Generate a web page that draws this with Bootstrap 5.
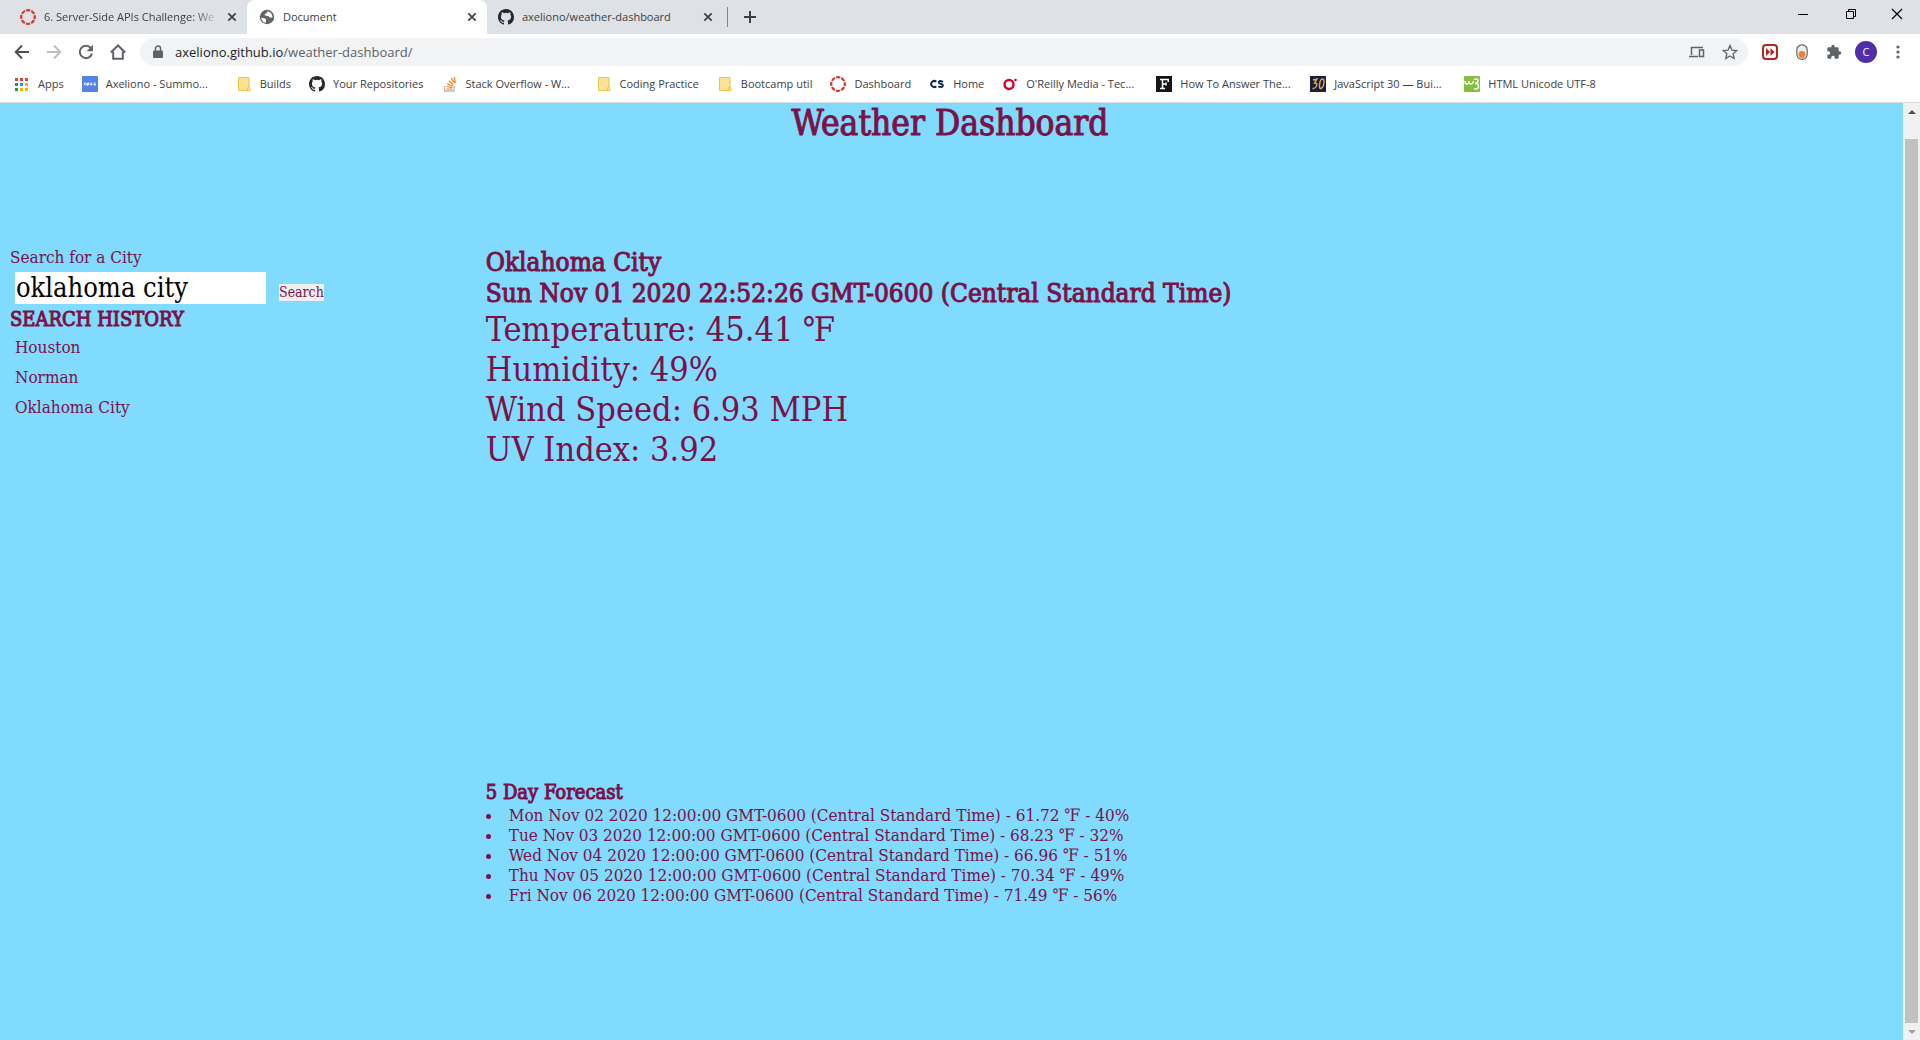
<!DOCTYPE html>
<html lang="en">
<head>
<meta charset="utf-8">
<meta name="viewport" content="width=device-width, initial-scale=1">
<title>Document</title>
<link href="https://cdn.jsdelivr.net/npm/bootstrap@5.3.0/dist/css/bootstrap.min.css" rel="stylesheet">
<style>
  body { font-family: "Open Sans", "Noto Sans", sans-serif; font-size: 11px; line-height: 16px; color: #3c4043; }
  button { border: 0; background: none; padding: 0; color: inherit; font: inherit; }
  svg { display: block; flex: none; }

  /* browser window */
  .tabstrip { height: 34px; background: #dee1e6; }
  .tab-item { width: 240px; padding: 0 10px 0 11px; gap: 8px; }
  .tab-first { width: 247px; padding-left: 20px; }
  .tab-current { background: #fff; border-radius: 8px 8px 0 0; padding-left: 12px; }
  .tab-title { flex: 1 1 0; overflow: hidden; white-space: nowrap; }
  .tab-fade { -webkit-mask-image: linear-gradient(to right, #000 86%, transparent); mask-image: linear-gradient(to right, #000 86%, transparent); }
  .tab-line { width: 1px; height: 20px; background: #80868b; }
  .window-keys { gap: 34px; padding: 0 17px 6px 0; color: #000; }
  .toolbar { height: 36px; padding: 0 14px; gap: 16px; color: #5f6368; }
  .addressbar { height: 28px; border-radius: 14px; background: #f1f3f4; padding: 0 10px 0 12px; gap: 11px; margin: 0 -2px; }
  .address-url { font-size: 13px; line-height: 20px; color: #5f6368; text-decoration: none; }
  .address-url span { color: #202124; }
  .address-icons { gap: 17px; }
  .avatar { width: 22px; height: 22px; border-radius: 50%; background: #512da8; color: #fff; margin: 0 -3px; }
  .bookmarks { height: 33px; padding: 0 14px 4px; gap: 18px; border-bottom: 1px solid #dadce0; }
  .bookmark { gap: 8px; color: #3c4043; text-decoration: none; white-space: nowrap; }
  .bookmark-long { width: 136px; }

  /* page */
  .weather-page { background: #80dbff; color: #7b1247; font-family: "DejaVu Serif Condensed", "DejaVu Serif", serif; font-size: 17px; line-height: 20px; overflow: hidden; }
  .weather-page h1, .weather-page h2, .weather-page h3 { font-weight: 400; -webkit-text-stroke: 1px #7b1247; }
  .weather-page h1 { font-size: 35px; line-height: 40px; margin: 0 3px 104px 0; }
  .side-col, .main-col { padding: 0 10px; }
  .weather-page h2 { font-size: 26px; line-height: 31px; margin: 0; }
  .weather-page h3 { font-size: 20px; line-height: 25px; margin: 0; }
  .search-row { padding: 5px 5px 3px; gap: 13px; }
  .city-box { width: 251px; height: 32px; border: 0; padding: 0 1px; border-radius: 0; font-size: 27px; line-height: 32px; color: #000; }
  .search-key { background: #efefef; font-size: 14px; line-height: 17px; margin-bottom: 3px; }
  .history { padding: 5px 5px; gap: 10px; }
  .current { height: 533px; }
  .current p { font-size: 34px; line-height: 40px; margin: 0; }
  .forecast { list-style: disc inside; }

  .scrollrail { width: 17px; background: #f1f1f1; padding: 0 2px; }
  .scroll-end { height: 17px; }
  .scroll-thumb { background: #c1c1c1; margin-top: 19px; }
</style>
<script src="https://cdn.jsdelivr.net/npm/bootstrap@5.3.0/dist/js/bootstrap.bundle.min.js"></script>
</head>
<body class="vh-100 d-flex flex-column overflow-hidden">
<svg width="0" height="0" class="position-absolute" aria-hidden="true">
  <symbol id="octo" viewBox="0 0 16 16"><path fill="#24292e" d="M8 0C3.58 0 0 3.58 0 8c0 3.54 2.29 6.53 5.47 7.59.4.07.55-.17.55-.38 0-.19-.01-.82-.01-1.49-2.01.37-2.53-.49-2.69-.94-.09-.23-.48-.94-.82-1.13-.28-.15-.68-.52-.01-.53.63-.01 1.08.58 1.23.82.72 1.21 1.87.87 2.33.66.07-.52.28-.87.51-1.07-1.78-.2-3.64-.89-3.64-3.95 0-.87.31-1.59.82-2.15-.08-.2-.36-1.02.08-2.12 0 0 .67-.21 2.2.82a7.6 7.6 0 0 1 4 0c1.53-1.04 2.2-.82 2.2-.82.44 1.1.16 1.92.08 2.12.51.56.82 1.27.82 2.15 0 3.07-1.87 3.75-3.65 3.95.29.25.54.73.54 1.48 0 1.07-.01 1.93-.01 2.2 0 .21.15.46.55.38A8.01 8.01 0 0 0 16 8c0-4.42-3.58-8-8-8z"/></symbol>
  <symbol id="ring" viewBox="0 0 16 16"><circle cx="8" cy="8" r="6.8" fill="none" stroke="#d5372f" stroke-width="2.2" stroke-dasharray="4.2 1.14" stroke-dashoffset="2.1"/></symbol>
  <symbol id="cross" viewBox="0 0 10 10"><path d="M1.3 1.3l7.4 7.4M8.7 1.3L1.3 8.7" stroke="#3c4043" stroke-width="1.7"/></symbol>
  <symbol id="folder" viewBox="0 0 16 16"><path d="M2.500 1.500h10.500v9.500l1 1v2.500H2.500z" fill="#fde293" stroke="#e8c44d"/><path d="M11.500 14.500v-3l1.500-1" fill="none" stroke="#e8c44d"/></symbol>
</svg>

<header class="bg-white">
  <div class="tabstrip d-flex">
    <div class="tab-item tab-first d-flex align-items-center">
      <svg width="16" height="16"><use href="#ring"/></svg>
      <span class="tab-title tab-fade">6. Server-Side APIs Challenge: We</span>
      <button aria-label="Close tab"><svg width="10" height="10"><use href="#cross"/></svg></button>
    </div>
    <div class="tab-item tab-current d-flex align-items-center">
      <svg width="16" height="16" viewBox="0 0 16 16"><circle cx="8" cy="8" r="7.2" fill="#5f6368"/><path d="M2.2 8.4l4 1 1 1.5-.4 2.9A6 6 0 0 1 2.2 8.400zM8.500 2.200l-.8 2.100-2.200.6 1 1.800 2.500.4 1.700 1.500 3-.2a6 6 0 0 0-2.600-5.200z" fill="#fff"/></svg>
      <span class="tab-title">Document</span>
      <button aria-label="Close tab"><svg width="10" height="10"><use href="#cross"/></svg></button>
    </div>
    <div class="tab-item d-flex align-items-center">
      <svg width="16" height="16"><use href="#octo"/></svg>
      <span class="tab-title">axeliono/weather-dashboard</span>
      <button class="me-1" aria-label="Close tab"><svg width="10" height="10"><use href="#cross"/></svg></button>
    </div>
    <div class="d-flex align-items-center gap-3">
      <span class="tab-line"></span>
      <button aria-label="New tab"><svg width="12" height="12" viewBox="0 0 12 12"><path d="M6 0v12M0 6h12" stroke="#3c4043" stroke-width="2"/></svg></button>
    </div>
    <div class="window-keys d-flex align-items-center ms-auto">
      <button aria-label="Minimize"><svg width="15" height="12" viewBox="0 0 15 12"><path d="M2 6.500h10" stroke="#000"/></svg></button>
      <button aria-label="Restore"><svg width="12" height="12" viewBox="0 0 12 12"><path d="M1.500 3.500h7v7h-7zM3.500 3V1.500h7v7H9" fill="none" stroke="#000"/></svg></button>
      <button aria-label="Close"><svg width="12" height="12" viewBox="0 0 12 12"><path d="M1 1l10 10M11 1L1 11" stroke="#000" stroke-width="1.200"/></svg></button>
    </div>
  </div>

  <div class="toolbar d-flex align-items-center">
    <button aria-label="Back"><svg width="16" height="16" viewBox="0 0 16 16"><path d="M15 8H2M8 1.500L1.700 8 8 14.500" fill="none" stroke="#4d5156" stroke-width="1.900"/></svg></button>
    <button aria-label="Forward"><svg width="16" height="16" viewBox="0 0 16 16"><path d="M1 8h13M8 1.500L14.300 8 8 14.500" fill="none" stroke="#bcbec1" stroke-width="1.900"/></svg></button>
    <button aria-label="Reload"><svg width="16" height="16" viewBox="0 0 16 16"><path d="M12.800 4A6.200 6.200 0 1 0 14 9.500" fill="none" stroke="#5f6368" stroke-width="2"/><path d="M15 .8v6.400H8.600z" fill="#5f6368"/></svg></button>
    <button aria-label="Home"><svg width="16" height="16" viewBox="0 0 16 16"><path d="M.8 8.500L8 1.500l7.200 7M3.200 7.500v7.300h9.600V7.500" fill="none" stroke="#5f6368" stroke-width="2"/></svg></button>
    <div class="addressbar d-flex align-items-center flex-grow-1">
      <svg width="12" height="14" viewBox="0 0 12 14"><path d="M2 5.500h8q1 0 1 1V12q0 1-1 1H2q-1 0-1-1V6.500q0-1 1-1z" fill="#5f6368"/><path d="M3.500 6V3.500a2.500 2.500 0 0 1 5 0V6" fill="none" stroke="#5f6368" stroke-width="1.500"/></svg>
      <a class="address-url me-auto" href="#"><span>axeliono.github.io</span>/weather-dashboard/</a>
      <div class="address-icons d-flex align-items-center">
        <svg width="16" height="14" viewBox="0 0 16 14"><path d="M2.500 10V2.500H14M0 11.500h9M10.500 5h4v6.500h-4z" fill="none" stroke="#5f6368" stroke-width="1.500"/></svg>
        <button aria-label="Bookmark this page"><svg width="16" height="16" viewBox="0 0 16 16"><path d="M8 1.500l1.900 4.600 4.900.4-3.700 3.200 1.100 4.800L8 11.900l-4.200 2.600 1.100-4.800L1.200 6.500l4.900-.4z" fill="none" stroke="#5f6368" stroke-width="1.300"/></svg></button>
      </div>
    </div>
    <button aria-label="Skip extension"><svg width="16" height="16" viewBox="0 0 16 16"><rect x="1" y="1" width="14" height="14" rx="3" fill="#fff" stroke="#b3261e" stroke-width="2"/><path d="M4 4l4 4-4 4zM8.500 4l4 4-4 4z" fill="#b3261e"/></svg></button>
    <button aria-label="Toggle extension"><svg width="16" height="16" viewBox="0 0 16 16"><rect x="2.800" y=".8" width="10.400" height="14.500" rx="5" fill="#eceff1" stroke="#666" stroke-width="1.200"/><circle cx="8" cy="10.500" r="3.400" fill="#ee7f37"/></svg></button>
    <button aria-label="Extensions"><svg width="16" height="16" viewBox="0 0 24 24"><path fill="#5f6368" d="M20.500 11H19V7c0-1.100-.9-2-2-2h-4V3.500a2.500 2.500 0 0 0-5 0V5H4c-1.100 0-2 .9-2 2v3.800h1.500a2.700 2.700 0 0 1 0 5.400H2V20c0 1.100.9 2 2 2h3.800v-1.500a2.700 2.700 0 0 1 5.400 0V22H17c1.100 0 2-.9 2-2v-4h1.500a2.500 2.500 0 0 0 0-5z"/></svg></button>
    <button class="avatar" aria-label="Profile">C</button>
    <button aria-label="Menu"><svg width="16" height="16" viewBox="0 0 16 16" fill="#5f6368"><circle cx="8" cy="3" r="1.600"/><circle cx="8" cy="8" r="1.600"/><circle cx="8" cy="13" r="1.600"/></svg></button>
  </div>

  <nav class="bookmarks d-flex" aria-label="Bookmarks">
    <a class="bookmark d-flex align-items-center" href="#"><svg width="16" height="16" viewBox="0 0 16 16"><path fill="#db4437" d="M1 2h3v3H1zM6 2h3v3H6zM11 2h3v3h-3z"/><path fill="#0f9d58" d="M1 7h3v3H1zM1 12h3v3H1z"/><path fill="#4285f4" d="M6 7h3v3H6z"/><path fill="#f4b400" d="M11 7h3v3h-3zM6 12h3v3H6zM11 12h3v3h-3z"/></svg>Apps</a>
    <a class="bookmark bookmark-long d-flex align-items-center" href="#"><svg width="16" height="16" viewBox="0 0 16 16"><rect width="16" height="16" rx="1" fill="#5383e8"/><g fill="none" stroke="#fff"><circle cx="3.300" cy="8" r="1"/><path d="M5.500 9.800V7h1.400v1.800H5.800M10 7H8.800v2H10V8M13.500 7h-1.400v2h1.400V8"/></g></svg>Axeliono - Summo...</a>
    <a class="bookmark d-flex align-items-center" href="#"><svg width="16" height="16"><use href="#folder"/></svg>Builds</a>
    <a class="bookmark d-flex align-items-center" href="#"><svg width="16" height="16"><use href="#octo"/></svg>Your Repositories</a>
    <a class="bookmark bookmark-long d-flex align-items-center" href="#"><svg width="16" height="16" viewBox="0 0 16 16"><path d="M2.500 10v5h9.500v-5" fill="none" stroke="#bcbbbb" stroke-width="1.300"/><path d="M4.200 13h6M4.400 10.500l5.900 1.100M5.200 7.600l5.400 2.600M6.800 4.800l4.600 3.900M9.200 2.200l3.500 5M12.200 1l1.200 5.600" stroke="#f48024" stroke-width="1.200"/></svg>Stack Overflow - W...</a>
    <a class="bookmark d-flex align-items-center" href="#"><svg width="16" height="16"><use href="#folder"/></svg>Coding Practice</a>
    <a class="bookmark d-flex align-items-center" href="#"><svg width="16" height="16"><use href="#folder"/></svg>Bootcamp util</a>
    <a class="bookmark d-flex align-items-center" href="#"><svg width="16" height="16"><use href="#ring"/></svg>Dashboard</a>
    <a class="bookmark d-flex align-items-center" href="#"><svg width="16" height="16" viewBox="0 0 16 16"><path d="M7.300 5.800A3 3 0 1 0 7.300 10.200M14 5.800Q10 3.800 9.800 6.200 9.900 7.600 12 8q2.200.5 1.800 2Q13 12 9.200 10.400" fill="none" stroke="#0c2c54" stroke-width="2"/></svg>Home</a>
    <a class="bookmark bookmark-long d-flex align-items-center" href="#"><svg width="16" height="16" viewBox="0 0 16 16"><circle cx="7" cy="8.500" r="4.500" fill="none" stroke="#d3002d" stroke-width="2.400"/><circle cx="13.500" cy="4" r="1.300" fill="#d3002d"/></svg>O'Reilly Media - Tec...</a>
    <a class="bookmark bookmark-long d-flex align-items-center" href="#"><svg width="16" height="16" viewBox="0 0 16 16"><path d="M0 0h16v16H0z" fill="#151515"/><path d="M4 3.500h8.200V6M4 12.500h5M6.500 3.500v9M6.500 8h3.500M10 6.500v3" fill="none" stroke="#fff" stroke-width="1.500"/></svg>How To Answer The...</a>
    <a class="bookmark bookmark-long d-flex align-items-center" href="#"><svg width="16" height="16" viewBox="0 0 16 16"><path d="M0 0h16v16H0z" fill="#1d1b42"/><path d="M3 4l4-1-2.500 4Q8 7 6.500 10 5 13 2.500 12.500M12.500 3Q10 3 9.500 9q-.2 4 1.500 3.500Q14 11 14 5.500 14 3 12.500 3z" fill="none" stroke="#e0b43a" stroke-width="1.400"/></svg>JavaScript 30 — Bui...</a>
    <a class="bookmark bookmark-long d-flex align-items-center" href="#"><svg width="16" height="16" viewBox="0 0 16 16"><rect width="16" height="16" rx="1" fill="#83bf3f"/><path d="M1 5q0 3 2 3t2-3q0 3 2 3t2.500-3M10 3.500q4-1.500 4 1t-3 3q4 0 3.500 3.500-1 3-4.500 1.500" fill="none" stroke="#fff" stroke-width="1.500"/></svg>HTML Unicode UTF-8</a>
  </nav>
</header>

<div class="d-flex flex-grow-1 overflow-hidden">
  <main class="weather-page flex-grow-1">
    <h1 class="text-center">Weather Dashboard</h1>
    <div class="row g-0">
      <aside class="side-col col-3">
        <label class="d-block" for="city">Search for a City</label>
        <div class="search-row d-flex align-items-end">
          <input class="city-box" id="city" type="text" value="oklahoma city">
          <button class="search-key">Search</button>
        </div>
        <h3>SEARCH HISTORY</h3>
        <ul class="history list-unstyled d-flex flex-column mb-0">
          <li>Houston</li>
          <li>Norman</li>
          <li>Oklahoma City</li>
        </ul>
      </aside>
      <section class="main-col col-9">
        <div class="current">
          <h2>Oklahoma City</h2>
          <h2>Sun Nov 01 2020 22:52:26 GMT-0600 (Central Standard Time)</h2>
          <p>Temperature: 45.41 ℉</p>
          <p>Humidity: 49%</p>
          <p>Wind Speed: 6.93 MPH</p>
          <p>UV Index: 3.92</p>
        </div>
        <h3>5 Day Forecast</h3>
        <ul class="forecast p-0 m-0">
          <li>Mon Nov 02 2020 12:00:00 GMT-0600 (Central Standard Time) - 61.72 ℉ - 40%</li>
          <li>Tue Nov 03 2020 12:00:00 GMT-0600 (Central Standard Time) - 68.23 ℉ - 32%</li>
          <li>Wed Nov 04 2020 12:00:00 GMT-0600 (Central Standard Time) - 66.96 ℉ - 51%</li>
          <li>Thu Nov 05 2020 12:00:00 GMT-0600 (Central Standard Time) - 70.34 ℉ - 49%</li>
          <li>Fri Nov 06 2020 12:00:00 GMT-0600 (Central Standard Time) - 71.49 ℉ - 56%</li>
        </ul>
      </section>
    </div>
  </main>
  <div class="scrollrail d-flex flex-column" aria-hidden="true">
    <div class="scroll-end d-flex align-items-center justify-content-center"><svg width="8" height="4" viewBox="0 0 8 4"><path d="M0 4l4-4 4 4z" fill="#505050"/></svg></div>
    <div class="scroll-thumb flex-grow-1"></div>
    <div class="scroll-end d-flex align-items-center justify-content-center"><svg width="8" height="4" viewBox="0 0 8 4"><path d="M0 0l4 4 4-4z" fill="#a3a3a3"/></svg></div>
  </div>
</div>
</body>
</html>
